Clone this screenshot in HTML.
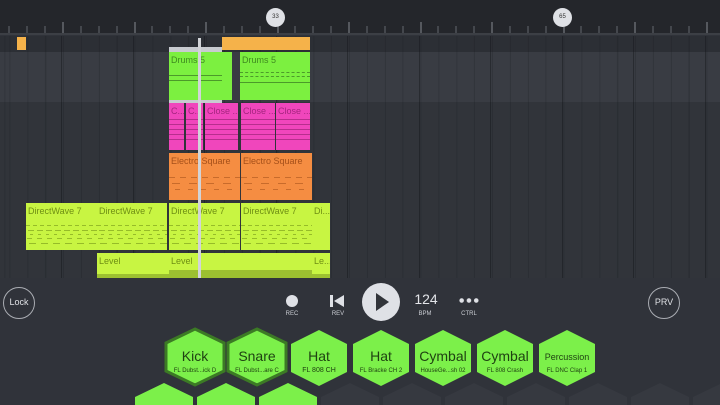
<!DOCTYPE html>
<html><head><meta charset="utf-8"><style>
*{margin:0;padding:0;box-sizing:border-box}
body{width:720px;height:405px;overflow:hidden;background:#30333a;font-family:"Liberation Sans",sans-serif;position:relative}
.ab{position:absolute}
#ruler{left:0;top:0;width:720px;height:35px;background:#24262b;border-bottom:2px solid #3c3f45}
.row{position:absolute;left:0;width:720px}
#grid{position:absolute;left:0;top:36px;width:720px;height:242px;
background-image:repeating-linear-gradient(90deg,rgba(20,22,26,.22) 0 1px,transparent 1px 17.875px);background-position:9.4px 0}
.bar{position:absolute;top:36px;width:1px;height:242px;background:rgba(20,22,26,.45)}
.c{position:absolute;overflow:hidden;font-size:9px;padding:3px 0 0 2px;white-space:nowrap}
.g{background:#7cf040;color:#3f8a20}
.p{background:#f046bc;color:#a5257f}
.o{background:#f58d42;color:#a5501a}
.l{background:#c8f542;color:#6f8f14}
.tick{position:absolute;width:2px;background:#4a4d53;bottom:4px}
.circ{position:absolute;border-radius:50%;background:#dfe1e6;color:#333;font-size:6px;text-align:center}
.lbl{position:absolute;font-size:6px;color:#c9ccd2;text-align:center;width:40px}
.nt{position:absolute;left:0;right:0;top:16px;bottom:6px;opacity:.55}
.p .nt{background:repeating-linear-gradient(0deg,transparent 0 4px,#8a1c68 4px 5px),linear-gradient(90deg,transparent 20%,#f046bc 20% 30%,transparent 30% 60%,#f046bc 60% 70%,transparent 70%);}
.o .nt{background:repeating-linear-gradient(90deg,#a5501a 0 6px,transparent 6px 11px) 0 8px/100% 1px no-repeat,repeating-linear-gradient(90deg,#a5501a 0 8px,transparent 8px 17px) 3px 14px/100% 1px no-repeat,repeating-linear-gradient(90deg,#a5501a 0 5px,transparent 5px 13px) 6px 20px/100% 1px no-repeat}
.l .nt{background:repeating-linear-gradient(90deg,#6f8f14 0 4px,transparent 4px 7px) 0 6px/100% 1px no-repeat,repeating-linear-gradient(90deg,#6f8f14 0 6px,transparent 6px 9px) 2px 11px/100% 1px no-repeat,repeating-linear-gradient(90deg,#6f8f14 0 3px,transparent 3px 8px) 4px 15px/100% 1px no-repeat,repeating-linear-gradient(90deg,#6f8f14 0 5px,transparent 5px 10px) 1px 19px/100% 1px no-repeat,repeating-linear-gradient(90deg,#6f8f14 0 7px,transparent 7px 12px) 3px 24px/100% 1px no-repeat}
</style></head><body>
<div id="ruler" class="ab"></div>
<div id="ticks"></div>
<div class="row" style="top:36px;height:16px;background:#2c2f35"></div>
<div class="row" style="top:52px;height:50px;background:#393c43"></div>
<div class="row" style="top:102px;height:50px;background:#31343a"></div>
<div class="row" style="top:152px;height:50px;background:#31343a"></div>
<div class="row" style="top:202px;height:50px;background:#31343a"></div>
<div class="row" style="top:252px;height:26px;background:#31343a"></div>
<div id="grid"></div>
<div class="bar" style="left:61px"></div><div class="bar" style="left:133px"></div><div class="bar" style="left:204px"></div><div class="bar" style="left:276px"></div><div class="bar" style="left:347px"></div><div class="bar" style="left:419px"></div><div class="bar" style="left:490px"></div><div class="bar" style="left:562px"></div><div class="bar" style="left:633px"></div><div class="bar" style="left:705px"></div>

<div class="circ" style="left:266px;top:8px;width:19px;height:19px;line-height:19px">33</div>
<div class="circ" style="left:553px;top:8px;width:19px;height:19px;line-height:19px">65</div>

<div class="c o" style="left:17px;top:37px;width:9px;height:13px"></div>
<div class="c o" style="left:222px;top:37px;width:88px;height:13px;background:#f5b24a"></div>
<div class="ab" style="left:17px;top:37px;width:9px;height:13px;background:#f5b24a"></div>
<div class="ab" style="left:169px;top:47px;width:53px;height:5px;background:#c8cbd0"></div>
<div class="c g" style="left:169px;top:52px;width:53px;height:48px">Drums 5<div class="ab" style="left:0;right:0;top:23px;height:1px;background:#4c9a2a"></div><div class="ab" style="left:0;right:0;top:28px;height:1px;background:#4c9a2a"></div></div>
<div class="c g" style="left:222px;top:52px;width:10px;height:48px"></div>
<div class="c g" style="left:240px;top:52px;width:70px;height:48px">Drums 5<div class="ab" style="left:0;right:0;top:20px;height:1px;border-top:1px dashed #4c9a2a"></div><div class="ab" style="left:0;right:0;top:24px;height:1px;border-top:1px dashed #4c9a2a"></div><div class="ab" style="left:0;right:0;top:30px;height:1px;background:#4c9a2a"></div></div>
<div class="ab" style="left:169px;top:100px;width:53px;height:3px;background:#c8cbd0"></div>

<div class="c p" style="left:169px;top:103px;width:15px;height:47px">C...<div class="nt"></div></div>
<div class="c p" style="left:186px;top:103px;width:17px;height:47px">C...<div class="nt"></div></div>
<div class="c p" style="left:205px;top:103px;width:33px;height:47px">Close ...<div class="nt"></div></div>
<div class="c p" style="left:241px;top:103px;width:34px;height:47px">Close ...<div class="nt"></div></div>
<div class="c p" style="left:276px;top:103px;width:34px;height:47px">Close ...<div class="nt"></div></div>

<div class="c o" style="left:169px;top:153px;width:71px;height:47px">Electro Square<div class="nt"></div></div>
<div class="c o" style="left:241px;top:153px;width:71px;height:47px">Electro Square<div class="nt"></div></div>

<div class="c l" style="left:26px;top:203px;width:71px;height:47px">DirectWave 7<div class="nt"></div></div>
<div class="c l" style="left:97px;top:203px;width:70px;height:47px">DirectWave 7<div class="nt"></div></div>
<div class="c l" style="left:169px;top:203px;width:71px;height:47px">DirectWave 7<div class="nt"></div></div>
<div class="c l" style="left:241px;top:203px;width:71px;height:47px">DirectWave 7<div class="nt"></div></div>
<div class="c l" style="left:312px;top:203px;width:18px;height:47px">Di...</div>

<div class="c l" style="left:97px;top:253px;width:72px;height:25px">Level<div class="ab" style="left:0;right:0;bottom:0;height:4px;background:#9cc030"></div></div>
<div class="c l" style="left:169px;top:253px;width:143px;height:25px">Level<div class="ab" style="left:0;right:0;bottom:0;height:8px;background:#9cc030"></div></div>
<div class="c l" style="left:312px;top:253px;width:18px;height:25px">Le...<div class="ab" style="left:0;right:0;bottom:0;height:4px;background:#9cc030"></div></div>

<div class="ab" style="left:198px;top:38px;width:3px;height:240px;background:#d2d4d8"></div>

<div class="ab" style="left:3px;top:287px;width:32px;height:32px;border:1.5px solid #aaadb3;border-radius:50%;color:#dfe1e5;font-size:9px;text-align:center;line-height:29px">Lock</div>
<div class="ab" style="left:648px;top:287px;width:32px;height:32px;border:1.5px solid #aaadb3;border-radius:50%;color:#dfe1e5;font-size:9px;text-align:center;line-height:29px">PRV</div>
<div class="ab" style="left:286px;top:295px;width:12px;height:12px;border-radius:50%;background:#dfe1e6"></div>
<div class="lbl" style="left:272px;top:311px">REC</div>
<svg class="ab" style="left:329px;top:294px" width="16" height="14"><rect x="1" y="1" width="3" height="12" fill="#dfe1e6"/><polygon points="15,1 15,13 5,7" fill="#dfe1e6"/></svg>
<div class="lbl" style="left:318px;top:311px">REV</div>
<div class="ab" style="left:362px;top:283px;width:38px;height:38px;border-radius:50%;background:#dfe1e6"></div>
<svg class="ab" style="left:374px;top:292px" width="16" height="20"><polygon points="2,1 15,10 2,19" fill="#31343a"/></svg>
<div class="ab" style="left:406px;top:291px;width:40px;text-align:center;color:#e3e5e9;font-size:14px">124</div>
<div class="lbl" style="left:405px;top:311px">BPM</div>
<div class="ab" style="left:458px;top:298px;width:22px;height:5px;background:radial-gradient(circle,#dfe1e6 2px,transparent 2.5px) 0 0/7.3px 5px repeat-x"></div>
<div class="lbl" style="left:449px;top:311px">CTRL</div>

<svg class="ab" style="left:0;top:0;overflow:hidden" width="720" height="405">
<g fill="#363940">
<polygon points="350,383 379,397 379,425 350,439 321,425 321,397"/>
<polygon points="412,383 441,397 441,425 412,439 383,425 383,397"/>
<polygon points="474,383 503,397 503,425 474,439 445,425 445,397"/>
<polygon points="536,383 565,397 565,425 536,439 507,425 507,397"/>
<polygon points="598,383 627,397 627,425 598,439 569,425 569,397"/>
<polygon points="660,383 689,397 689,425 660,439 631,425 631,397"/>
<polygon points="722,383 751,397 751,425 722,439 693,425 693,397"/>
</g>
<g fill="#7cf04a">
<polygon points="164,383 193,397 193,425 164,439 135,425 135,397"/>
<polygon points="226,383 255,397 255,425 226,439 197,425 197,397"/>
<polygon points="288,383 317,397 317,425 288,439 259,425 259,397"/>
<polygon points="195,329 224,343 224,371 195,385 166,371 166,343" stroke="#3c7a25" stroke-width="3"/>
<polygon points="257,329 286,343 286,371 257,385 228,371 228,343" stroke="#3c7a25" stroke-width="3"/>
<polygon points="319,330 347,344 347,372 319,386 291,372 291,344"/>
<polygon points="381,330 409,344 409,372 381,386 353,372 353,344"/>
<polygon points="443,330 471,344 471,372 443,386 415,372 415,344"/>
<polygon points="505,330 533,344 533,372 505,386 477,372 477,344"/>
<polygon points="567,330 595,344 595,372 567,386 539,372 539,344"/>
</g>
<g font-family="Liberation Sans,sans-serif" fill="#1f4212" text-anchor="middle">
<text x="195" y="361" font-size="14">Kick</text><text x="195" y="372" font-size="6">FL Dubst...ick D</text>
<text x="257" y="361" font-size="14">Snare</text><text x="257" y="372" font-size="6">FL Dubst...are C</text>
<text x="319" y="361" font-size="14">Hat</text><text x="319" y="372" font-size="7">FL 808 CH</text>
<text x="381" y="361" font-size="14">Hat</text><text x="381" y="372" font-size="6">FL Bracke CH 2</text>
<text x="443" y="361" font-size="14">Cymbal</text><text x="443" y="372" font-size="6">HouseGe...sh 02</text>
<text x="505" y="361" font-size="14">Cymbal</text><text x="505" y="372" font-size="6">FL 808 Crash</text>
<text x="567" y="360" font-size="9">Percussion</text><text x="567" y="372" font-size="6">FL DNC Clap 1</text>
</g>
</svg>
<script>
var t=document.getElementById('ticks'),h='';
for(var i=0;i<42;i++){var x=9.4+i*17.875;var big=Math.abs(((x-61.5)/71.5)-Math.round((x-61.5)/71.5))<0.05;
h+='<div class="tick" style="left:'+(x-1)+'px;top:'+(big?22:26)+'px;height:'+(big?11:7)+'px;background:'+(big?'#55585e':'#44474d')+'"></div>';}
t.innerHTML=h;
</script>
</body></html>
